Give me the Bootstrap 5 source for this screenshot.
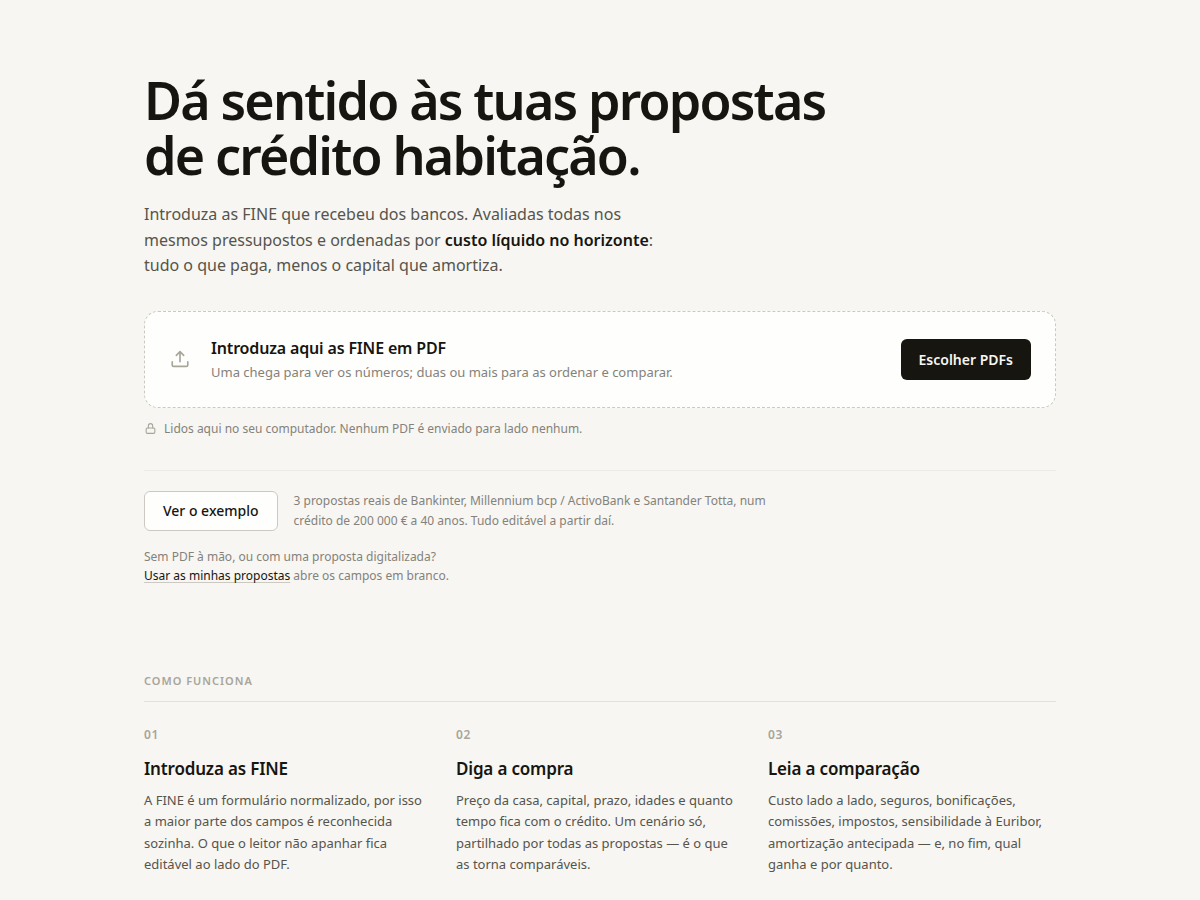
<!DOCTYPE html>
<html lang="pt">
<head>
<meta charset="utf-8">
<meta name="viewport" content="width=device-width, initial-scale=1">
<title>Propostas de crédito habitação</title>
<link href="https://cdn.jsdelivr.net/npm/bootstrap@5.3.0/dist/css/bootstrap.min.css" rel="stylesheet">
<style>
:root { --ink: #16150f; --soft: #56544b; --muted: #84827a; --faint: #a8a599; --rule: #e3e1da; --edge: #cbc9c1; }
body { background: #f7f6f3; color: var(--ink); font-family: "Noto Sans", sans-serif; }
.page { max-width: 960px; padding: 72px 24px 24px; }
.headline { font-size: 52px; line-height: 55px; font-weight: 600; letter-spacing: -0.035em; max-width: 720px; margin-bottom: 20px; }
.intro { font-size: 16px; line-height: 1.6; color: var(--soft); max-width: 520px; margin-bottom: 32px; }
.intro strong { font-weight: 600; color: var(--ink); }
.dropzone { background: #fefefd; border: 1px dashed var(--edge); border-radius: 14px; gap: 20px; padding: 24px; }
.drop-title { font-size: 16px; line-height: 24px; font-weight: 600; letter-spacing: -0.01em; }
.drop-hint { font-size: 13px; line-height: 21px; color: var(--muted); margin-top: 2px; }
.icon-faint { color: var(--faint); }
.action { font-size: 14px; line-height: 21px; border-radius: 6px; padding: 10px 18px; }
.action-dark { --bs-btn-color: #f7f6f3; --bs-btn-bg: #16150f; --bs-btn-hover-color: #fff; --bs-btn-hover-bg: #34322a; border: 0; font-weight: 600; }
.action-light { --bs-btn-color: #16150f; --bs-btn-bg: #fefefd; --bs-btn-border-color: #cbc9c1; --bs-btn-hover-bg: #f1f0eb; font-weight: 500; line-height: 18px; }
.note { font-size: 12px; line-height: 19px; color: var(--muted); }
.privacy { gap: 7px; margin-top: 11px; padding-bottom: 32px; border-bottom: 1px solid #eceae4; }
.example { margin-top: 20px; gap: 16px; }
.example-text { max-width: 480px; line-height: 20px; }
.own-link { color: var(--ink); text-decoration: underline 1px var(--edge); text-underline-offset: 2px; text-decoration-skip-ink: none; }
.steps { margin-top: 88px; }
.steps-label { font-size: 11px; line-height: 16px; font-weight: 600; letter-spacing: 0.09em; color: var(--faint); padding-bottom: 12px; border-bottom: 1px solid var(--rule); margin-bottom: 24px; }
.step-no { font-size: 12px; line-height: 18px; font-weight: 600; letter-spacing: 0.06em; color: var(--faint); margin-bottom: 12px; }
.step-title { font-size: 17px; line-height: 26px; font-weight: 600; letter-spacing: -0.01em; margin-bottom: 8px; }
.step-text { font-size: 13px; line-height: 1.65; color: var(--soft); }
</style>
</head>
<body>
<main class="page container-fluid mx-auto">
  <h1 class="headline">Dá sentido às tuas propostas de crédito habitação.</h1>
  <p class="intro">Introduza as FINE que recebeu dos bancos. Avaliadas todas nos mesmos pressupostos e ordenadas por <strong>custo líquido no horizonte</strong>: tudo o que paga, menos o capital que amortiza.</p>

  <section class="dropzone d-flex flex-wrap flex-sm-nowrap align-items-center">
    <svg class="icon-faint flex-shrink-0" width="22" height="22" viewBox="0 0 24 24" fill="none" stroke="currentColor" stroke-width="1.8" stroke-linecap="round" stroke-linejoin="round" aria-hidden="true"><path d="M12 15V4M8 8l4-4 4 4M3.500 15v3.500a1.500 1.500 0 0 0 1.500 1.500h14a1.500 1.500 0 0 0 1.500-1.500V15"/></svg>
    <div class="flex-grow-1">
      <h2 class="drop-title mb-0">Introduza aqui as FINE em PDF</h2>
      <p class="drop-hint mb-0">Uma chega para ver os números; duas ou mais para as ordenar e comparar.</p>
    </div>
    <button type="button" class="btn action action-dark flex-shrink-0">Escolher PDFs</button>
  </section>

  <div class="privacy note d-flex align-items-center">
    <svg class="icon-faint flex-shrink-0" width="13" height="13" viewBox="0 0 24 24" fill="none" stroke="currentColor" stroke-width="2" stroke-linecap="round" stroke-linejoin="round" aria-hidden="true"><rect x="4" y="11" width="16" height="10" rx="2"/><path d="M8 11V7a4 4 0 0 1 8 0v4"/></svg>
    <span>Lidos aqui no seu computador. Nenhum PDF é enviado para lado nenhum.</span>
  </div>

  <div class="example d-flex flex-wrap flex-sm-nowrap align-items-center">
    <button type="button" class="btn action action-light flex-shrink-0">Ver o exemplo</button>
    <p class="note example-text mb-0">3 propostas reais de Bankinter, Millennium bcp / ActivoBank e Santander Totta, num crédito de 200 000 € a 40 anos. Tudo editável a partir daí.</p>
  </div>
  <p class="note mt-3 mb-0">Sem PDF à mão, ou com uma proposta digitalizada?<br><a href="#" class="own-link">Usar as minhas propostas</a> abre os campos em branco.</p>

  <section class="steps">
    <h2 class="steps-label text-uppercase">Como funciona</h2>
    <div class="row g-4">
      <article class="col-12 col-md-4">
        <div class="step-no">01</div>
        <h3 class="step-title">Introduza as FINE</h3>
        <p class="step-text mb-0">A FINE é um formulário normalizado, por isso a maior parte dos campos é reconhecida sozinha. O que o leitor não apanhar fica editável ao lado do PDF.</p>
      </article>
      <article class="col-12 col-md-4">
        <div class="step-no">02</div>
        <h3 class="step-title">Diga a compra</h3>
        <p class="step-text mb-0">Preço da casa, capital, prazo, idades e quanto tempo fica com o crédito. Um cenário só, partilhado por todas as propostas — é o que as torna comparáveis.</p>
      </article>
      <article class="col-12 col-md-4">
        <div class="step-no">03</div>
        <h3 class="step-title">Leia a comparação</h3>
        <p class="step-text mb-0">Custo lado a lado, seguros, bonificações, comissões, impostos, sensibilidade à Euribor, amortização antecipada — e, no fim, qual ganha e por quanto.</p>
      </article>
    </div>
  </section>
</main>
<script src="https://cdn.jsdelivr.net/npm/bootstrap@5.3.0/dist/js/bootstrap.bundle.min.js"></script>
</body>
</html>
